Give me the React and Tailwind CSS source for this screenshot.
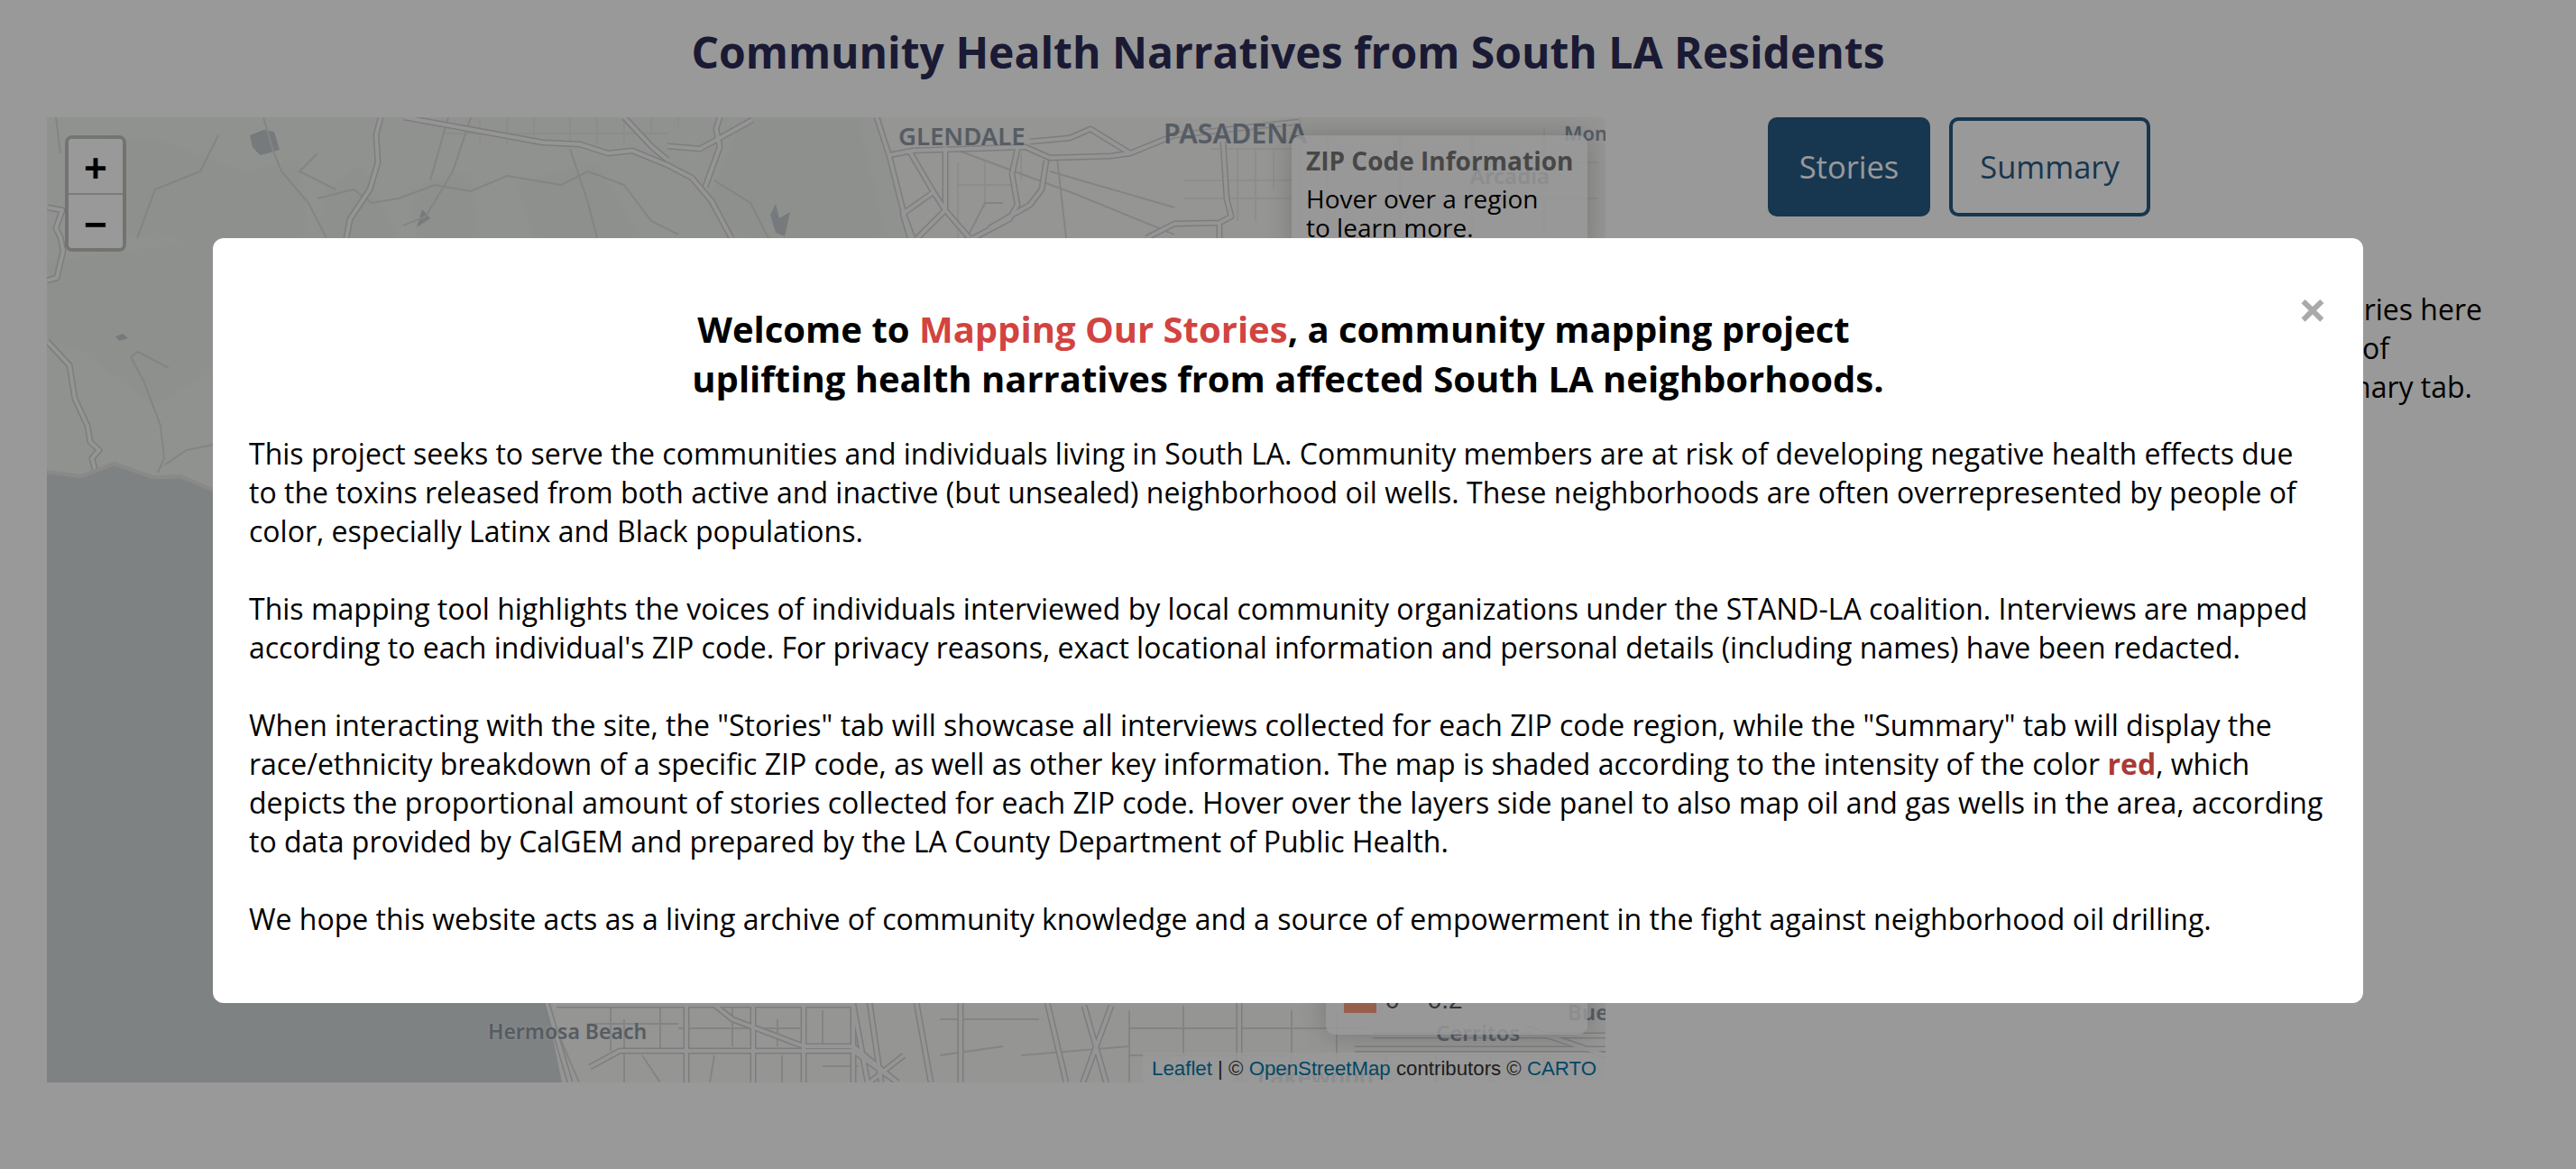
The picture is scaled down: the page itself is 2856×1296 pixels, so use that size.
import React from 'react';

// map coordinates are relative to the map's top left corner
const roads = [
  'M370 0L365 20L367 50L358 80L336 113L332 134',
  'M396 0L550 28L591 30L622 40L649 37L688 53L715 67L737 93L759 134',
  'M640 0L671 33L688 47',
  'M746 0L742 13L746 33L730 77',
  'M688 32L724 35L746 23L782 3',
  'M920 0L934 43L951 110L960 134',
  'M934 42L960 37L1085 33L1112 45L1179 43L1201 40L1250 20L1388 5',
  'M1090 27L1134 23L1157 13L1201 40',
  'M956 37L983 83L996 103L1023 134',
  'M996 33L996 103',
  'M983 83L949 107L957 134',
  'M996 103L965 134',
  'M1076 35L1070 63L1076 97L1067 113L1027 134',
  'M1108 48L1103 80L1090 97L1045 123',
  'M1304 27L1308 90L1313 110L1300 117L1250 118L1219 134',
  'M1300 117L1300 134',
  'M1 100L17 103L10 123L15 133L18 148L11 178L0 181',
  'M0 248L25 275L31 312L45 342L48 360L58 369L50 378L53 390',
  'M554 981L580 1070',
  'M602 1053L635 1035L894 1035L943 1070',
  'M565 984L894 984',
  'M740 984L760 1000L839 1030L894 1030L943 1070',
  'M709 981V1070M783 981V1070M839 981V1070M894 981V1070M912 981L925 1070M964 981L980 1070M1013 981V1070M1109 981L1130 1070',
  'M894 984L910 1070M950 1040L912 1070',
  'M1148 1072L1180 985M1150 985L1175 1072',
  'M1322 981V1070',
  'M1450 1033L1728 1033M1470 1018L1728 1018',
  'M1640 1010L1728 1040',
];

const thinRoads = [
  'M470 0L450 60L420 110L395 120M445 0L425 70',
  'M240 0L250 35L260 60L290 95L310 134',
  'M300 90L340 80L360 95L390 90L430 75L470 82L510 65L570 75L600 60L640 75L670 115L700 130',
  'M580 35L600 95L610 134M740 70L780 95L800 134',
  'M10 0L15 40M190 20L170 60L120 80L100 134',
  'M300 40L280 60L320 80',
  'M1000 33L1140 85L1250 130M1020 134L1040 95L1060 95',
  'M1112 60L1250 100M1120 45L1130 134',
  'M93 266L108 294L126 342L130 378L123 394M93 266L101 260L135 278',
  'M131 385L155 369L184 363',
  'M560 1000L590 1070M640 1000L640 1070M740 1040L735 1070M660 1040L680 1070',
  'M625 984V1035M680 984V1035M760 984V1030M810 1000V1030M860 990V1030M1080 1040L1200 1030M1200 990V1070',
  'M1260 985V1070M1380 990V1070M1430 990V1070M1200 1010H1460M1200 1040H1370M1485 1040V1070M1540 1040V1070M1600 1040V1070M1660 1040V1070',
  'M600 1005H700M700 1010H835M815 1040V1070M860 1052H900M990 1000H1100M990 1040L1060 1030',
];

const grids = [
  'M480 0V30M510 0V30M540 0V30M580 0V30M610 0V30M640 0V30M670 0V18M700 0V10M440 18H690',
  'M1290 35H1388M1320 35V115M1340 35V115M1360 35V80M1260 70H1380M1260 90H1380',
  'M1390 0V130M1420 20V130M1380 50H1720M1420 90H1720M1500 20V130M1580 20V130M1660 10V130',
  'M1010 50V134M1040 50V100M1080 40V70M1010 75H1070',
];

const greens = [
  'M40 40L110 20L220 60L280 45L290 134L50 134Z',
  'M0 160L184 134V280L120 320L40 260L0 250Z',
  'M310 80L350 50L390 134H300Z',
  'M400 80L470 60L480 134H410Z',
  'M520 70L610 50L660 134H540Z',
  'M770 0H900L930 134H770L730 100Z',
];

const labelClass =
  "absolute whitespace-nowrap font-['Noto_Sans',sans-serif] font-semibold leading-none text-[#8f9aa6] [text-shadow:0_0_3px_#f4f4f4]";

function MapBackdrop() {
  return (
    <svg viewBox="0 0 1728 1070" className="absolute inset-0 h-full w-full">
      <rect width="1728" height="1070" fill="#f8f8f6" />
      <path d="M0 0H925L960 134H236V420H0Z" fill="#f1f4ef" />
      <g className="blur-xs">
        {greens.map((d) => (
          <path key={d} d={d} fill="#ebf0e9" />
        ))}
      </g>
      <path d="M225 20L240 14L252 16L258 36L245 40L236 42L228 33Z" fill="#c6cccf" />
      <path d="M416 102L425 112L410 122Z" fill="#c6cccf" />
      <path d="M808 96L812 112L824 105L818 132L808 128L802 108Z" fill="#c6cccf" />
      <path d="M76 243L84 240L90 245L80 248Z" fill="#c6cccf" />
      <path
        d="M0 395L38 400L75 386L118 401L148 400L184 415L553 981L571 1070L0 1070Z"
        fill="#d2d9d9"
      />
      {grids.map((d) => (
        <path key={d} d={d} fill="none" stroke="#e8e8e6" strokeWidth="1.5" />
      ))}
      {thinRoads.map((d) => (
        <path key={d} d={d} fill="none" stroke="#dcdddb" strokeWidth="2" />
      ))}
      <path
        d="M0 393L38 398L75 384L118 399L148 398L184 413"
        fill="none"
        stroke="#e4e5e3"
        strokeWidth="4"
      />
      {roads.map((d) => (
        <path key={d} d={d} fill="none" stroke="#d0d1d0" strokeWidth="7" strokeLinejoin="round" />
      ))}
      {roads.map((d) => (
        <path key={`${d}-in`} d={d} fill="none" stroke="#f8f8f8" strokeWidth="4" strokeLinejoin="round" />
      ))}
    </svg>
  );
}

function MapPanel() {
  return (
    <div className="relative h-[1070px] w-[1728px] shrink-0 overflow-hidden">
      <MapBackdrop />

      <span className={`${labelClass} left-[944px] top-[7px] text-[27.5px]`}>GLENDALE</span>
      <span className={`${labelClass} left-[1238px] top-[2px] text-[30.5px]`}>PASADENA</span>
      <span className={`${labelClass} left-[1682px] top-[6px] text-[22px]`}>Monrovia</span>
      <span className={`${labelClass} left-[1578px] top-[53px] text-[24px]`}>Arcadia</span>
      <span className={`${labelClass} left-[489px] top-[1002px] text-[23px]`}>Hermosa Beach</span>
      <span className={`${labelClass} left-[1540px] top-[1003px] text-[24px]`}>Cerritos</span>
      <span className={`${labelClass} left-[1686px] top-[980px] text-[24px]`}>Buena Park</span>
      <span className={`${labelClass} left-[1342px] top-[1050px] text-[26px]`}>Lakewood</span>

      {/* zoom control */}
      <div className="absolute left-[20px] top-[20px] flex w-[68px] flex-col rounded-lg border-4 border-black/20 bg-clip-padding font-['Liberation_Mono',monospace] text-[44px] font-bold text-black">
        <div className="flex h-[62px] items-center justify-center rounded-t-[4px] border-b-2 border-[#ccc] bg-white pt-3">+</div>
        <div className="flex h-[59px] items-center justify-center rounded-b-[4px] bg-white pt-3">−</div>
      </div>

      {/* info panel */}
      <div className="absolute right-[20px] top-[20px] w-[328px] rounded-[10px] bg-white/80 px-4 py-3 text-[28px] leading-[32px] text-black shadow-[0_0_30px_rgba(0,0,0,0.2)]">
        <h4 className="mb-[10px] whitespace-nowrap font-bold text-[#777]">ZIP Code Information</h4>
        <p>
          Hover over a region
          <br />
          to learn more.
        </p>
      </div>

      {/* legend */}
      <div className="absolute bottom-[53px] right-[20px] w-[290px] rounded-[10px] bg-white/80 px-5 pb-5 font-['Liberation_Sans',sans-serif] text-[28px] leading-[36px] text-[#555] shadow-[0_0_30px_rgba(0,0,0,0.2)]">
        <div className="flex items-center gap-[10px]">
          <i className="block h-[36px] w-[36px] bg-[#fca082]" />
          <span className="pt-2">0 – 0.2</span>
        </div>
      </div>

      {/* attribution */}
      <div className="absolute bottom-0 right-0 bg-white/80 px-[10px] pt-[2px] font-['Liberation_Sans',sans-serif] text-[22.25px] leading-[31px] text-[#333]">
        <span className="text-[#0078a8]">Leaflet</span> | © <span className="text-[#0078a8]">OpenStreetMap</span> contributors © <span className="text-[#0078a8]">CARTO</span>
      </div>
    </div>
  );
}

function WelcomeModal() {
  return (
    <div className="absolute inset-0 bg-black/40">
      <div className="relative mx-auto mt-[264px] h-[848px] w-[2384px] rounded-xl bg-white px-10 pt-[74px] text-[32px] leading-[43px] text-black">
        <span className="absolute right-[40px] top-[40px] text-[56px] font-bold leading-[76px] text-[#aaa]">×</span>

        <h2 className="mb-[34px] text-center text-[40px] font-bold leading-[54.5px]">
          <span className="block pr-8">
            Welcome to <span className="text-[#d2443f]">Mapping Our Stories</span>, a community mapping project
          </span>
          <span className="block">uplifting health narratives from affected South LA neighborhoods.</span>
        </h2>

        <p>
          This project seeks to serve the communities and individuals living in South LA. Community members are at risk of developing negative health effects due to the toxins released from both active and inactive (but unsealed) neighborhood oil wells. These neighborhoods are often overrepresented by people of color, especially Latinx and Black populations.
          <br />
          <br />
          This mapping tool highlights the voices of individuals interviewed by local community organizations under the STAND-LA coalition. Interviews are mapped according to each individual's ZIP code. For privacy reasons, exact locational information and personal details (including names) have been redacted.
          <br />
          <br />
          When interacting with the site, the "Stories" tab will showcase all interviews collected for each ZIP code region, while the "Summary" tab will display the race/ethnicity breakdown of a specific ZIP code, as well as other key information. The map is shaded according to the intensity of the color <strong className="font-bold text-[#aa3a36]">red</strong>, which depicts the proportional amount of stories collected for each ZIP code. Hover over the layers side panel to also map oil and gas wells in the area, according to data provided by CalGEM and prepared by the LA County Department of Public Health.
          <br />
          <br />
          We hope this website acts as a living archive of community knowledge and a source of empowerment in the fight against neighborhood oil drilling.
        </p>
      </div>
    </div>
  );
}

export default function App() {
  return (
    <div className="relative h-[1296px] w-full overflow-hidden bg-white font-['Open_Sans',sans-serif]">
      <h1 className="pt-[24px] text-center text-[48px] font-bold leading-[68px] text-[#2c2c58]">
        Community Health Narratives from South LA Residents
      </h1>

      <div className="mt-[38px] flex pl-[52px]">
        <MapPanel />

        <div className="ml-[180px] flex flex-col">
          <div className="flex gap-[21px] text-[34.5px]">
            <button className="h-[110px] w-[180px] rounded-[10px] border-4 border-[#275a84] bg-[#275a84] text-white">Stories</button>
            <button className="h-[110px] w-[223px] rounded-[10px] border-4 border-[#275a84] bg-white text-[#275a84]">Summary</button>
          </div>

          <div className="mt-[81px] whitespace-nowrap text-[32px] leading-[43px] text-black">
            <span className="block w-[792px] text-right">Click a ZIP code on the map to read stories here</span>
            <span className="block w-[689px] text-right">and hear from residents in each part of</span>
            <span className="block w-[781px] text-right">South LA, or open the Summary tab.</span>
          </div>
        </div>
      </div>

      <WelcomeModal />
    </div>
  );
}
